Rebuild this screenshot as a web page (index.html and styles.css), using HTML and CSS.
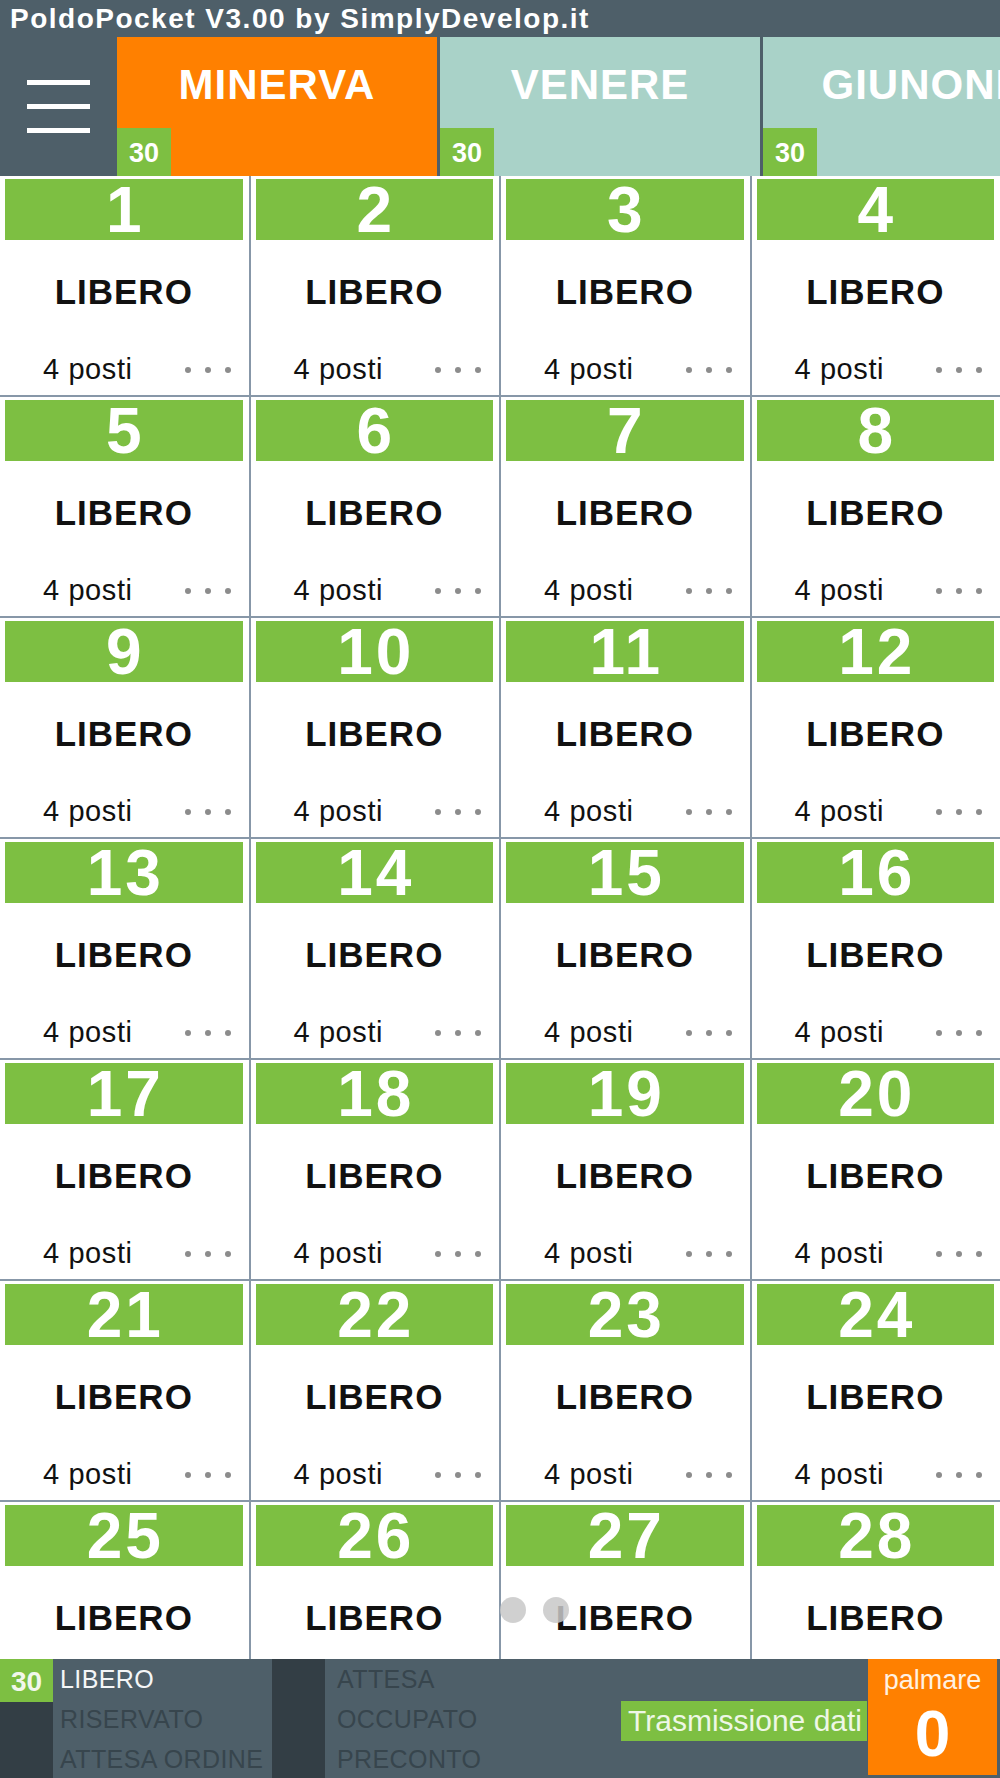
FILE: index.html
```html
<!DOCTYPE html>
<html lang="it">
<head>
  <meta charset="UTF-8" />
  <meta name="viewport" content="width=device-width, initial-scale=1.0" />
  <title>PoldoPocket</title>
  <link rel="stylesheet" href="styles.css">
</head>
<body>
  <div class="titlebar">PoldoPocket V3.00 by SimplyDevelop.it</div>

  <div class="tabbar">
    <div class="menu">
      <span></span><span></span><span></span>
    </div>
    <div class="tab active"><div class="tab-label">MINERVA</div><div class="badge">30</div></div>
    <div class="tab"><div class="tab-label">VENERE</div><div class="badge">30</div></div>
    <div class="tab"><div class="tab-label">GIUNONE</div><div class="badge">30</div></div>
  </div>

  <div class="grid">
    <div class="tile"><div class="tile-num">1</div><div class="tile-state">LIBERO</div><div class="tile-foot"><span>4 posti</span><span class="dots"><i></i><i></i><i></i></span></div></div>
    <div class="tile"><div class="tile-num">2</div><div class="tile-state">LIBERO</div><div class="tile-foot"><span>4 posti</span><span class="dots"><i></i><i></i><i></i></span></div></div>
    <div class="tile"><div class="tile-num">3</div><div class="tile-state">LIBERO</div><div class="tile-foot"><span>4 posti</span><span class="dots"><i></i><i></i><i></i></span></div></div>
    <div class="tile"><div class="tile-num">4</div><div class="tile-state">LIBERO</div><div class="tile-foot"><span>4 posti</span><span class="dots"><i></i><i></i><i></i></span></div></div>
    <div class="tile"><div class="tile-num">5</div><div class="tile-state">LIBERO</div><div class="tile-foot"><span>4 posti</span><span class="dots"><i></i><i></i><i></i></span></div></div>
    <div class="tile"><div class="tile-num">6</div><div class="tile-state">LIBERO</div><div class="tile-foot"><span>4 posti</span><span class="dots"><i></i><i></i><i></i></span></div></div>
    <div class="tile"><div class="tile-num">7</div><div class="tile-state">LIBERO</div><div class="tile-foot"><span>4 posti</span><span class="dots"><i></i><i></i><i></i></span></div></div>
    <div class="tile"><div class="tile-num">8</div><div class="tile-state">LIBERO</div><div class="tile-foot"><span>4 posti</span><span class="dots"><i></i><i></i><i></i></span></div></div>
    <div class="tile"><div class="tile-num">9</div><div class="tile-state">LIBERO</div><div class="tile-foot"><span>4 posti</span><span class="dots"><i></i><i></i><i></i></span></div></div>
    <div class="tile"><div class="tile-num">10</div><div class="tile-state">LIBERO</div><div class="tile-foot"><span>4 posti</span><span class="dots"><i></i><i></i><i></i></span></div></div>
    <div class="tile"><div class="tile-num">11</div><div class="tile-state">LIBERO</div><div class="tile-foot"><span>4 posti</span><span class="dots"><i></i><i></i><i></i></span></div></div>
    <div class="tile"><div class="tile-num">12</div><div class="tile-state">LIBERO</div><div class="tile-foot"><span>4 posti</span><span class="dots"><i></i><i></i><i></i></span></div></div>
    <div class="tile"><div class="tile-num">13</div><div class="tile-state">LIBERO</div><div class="tile-foot"><span>4 posti</span><span class="dots"><i></i><i></i><i></i></span></div></div>
    <div class="tile"><div class="tile-num">14</div><div class="tile-state">LIBERO</div><div class="tile-foot"><span>4 posti</span><span class="dots"><i></i><i></i><i></i></span></div></div>
    <div class="tile"><div class="tile-num">15</div><div class="tile-state">LIBERO</div><div class="tile-foot"><span>4 posti</span><span class="dots"><i></i><i></i><i></i></span></div></div>
    <div class="tile"><div class="tile-num">16</div><div class="tile-state">LIBERO</div><div class="tile-foot"><span>4 posti</span><span class="dots"><i></i><i></i><i></i></span></div></div>
    <div class="tile"><div class="tile-num">17</div><div class="tile-state">LIBERO</div><div class="tile-foot"><span>4 posti</span><span class="dots"><i></i><i></i><i></i></span></div></div>
    <div class="tile"><div class="tile-num">18</div><div class="tile-state">LIBERO</div><div class="tile-foot"><span>4 posti</span><span class="dots"><i></i><i></i><i></i></span></div></div>
    <div class="tile"><div class="tile-num">19</div><div class="tile-state">LIBERO</div><div class="tile-foot"><span>4 posti</span><span class="dots"><i></i><i></i><i></i></span></div></div>
    <div class="tile"><div class="tile-num">20</div><div class="tile-state">LIBERO</div><div class="tile-foot"><span>4 posti</span><span class="dots"><i></i><i></i><i></i></span></div></div>
    <div class="tile"><div class="tile-num">21</div><div class="tile-state">LIBERO</div><div class="tile-foot"><span>4 posti</span><span class="dots"><i></i><i></i><i></i></span></div></div>
    <div class="tile"><div class="tile-num">22</div><div class="tile-state">LIBERO</div><div class="tile-foot"><span>4 posti</span><span class="dots"><i></i><i></i><i></i></span></div></div>
    <div class="tile"><div class="tile-num">23</div><div class="tile-state">LIBERO</div><div class="tile-foot"><span>4 posti</span><span class="dots"><i></i><i></i><i></i></span></div></div>
    <div class="tile"><div class="tile-num">24</div><div class="tile-state">LIBERO</div><div class="tile-foot"><span>4 posti</span><span class="dots"><i></i><i></i><i></i></span></div></div>
    <div class="tile"><div class="tile-num">25</div><div class="tile-state">LIBERO</div><div class="tile-foot"><span>4 posti</span><span class="dots"><i></i><i></i><i></i></span></div></div>
    <div class="tile"><div class="tile-num">26</div><div class="tile-state">LIBERO</div><div class="tile-foot"><span>4 posti</span><span class="dots"><i></i><i></i><i></i></span></div></div>
    <div class="tile"><div class="tile-num">27</div><div class="tile-state">LIBERO</div><div class="tile-foot"><span>4 posti</span><span class="dots"><i></i><i></i><i></i></span></div></div>
    <div class="tile"><div class="tile-num">28</div><div class="tile-state">LIBERO</div><div class="tile-foot"><span>4 posti</span><span class="dots"><i></i><i></i><i></i></span></div></div>
  </div>

  <!-- indicatore di pagina -->
  <div class="pager"><span></span><span></span></div>

  <footer class="statusbar">
    <div class="count-col">
      <div class="count">30</div>
    </div>
    <div class="legend">
      <div class="on">LIBERO</div>
      <div>RISERVATO</div>
      <div>ATTESA ORDINE</div>
    </div>
    <div class="dark-col"></div>
    <div class="legend legend-2">
      <div>ATTESA</div>
      <div>OCCUPATO</div>
      <div>PRECONTO</div>
    </div>
    <div class="spacer"></div>
    <div class="trasm">Trasmissione dati</div>
    <div class="palmare">
      <div class="palmare-label">palmare</div>
      <div class="palmare-num">0</div>
    </div>
  </footer>
</body>
</html>
```

FILE: styles.css
```css
:root {
  --header: #4e5f69;
  --dark: #333e45;
  --orange: #ff8000;
  --teal: #a9d2c8;
  --green: #7dbf42;
  --line: #8797a8;
}

body {
  margin: 0;
  width: 1000px;
  height: 1778px;
  overflow: hidden;
  position: relative;
  font-family: 'Liberation Sans', Arial, sans-serif;
  background: var(--header);
}

.titlebar {
  height: 37px;
  line-height: 37px;
  padding-left: 10px;
  color: #fff;
  font-size: 28px;
  font-weight: 700;
  letter-spacing: 1.5px;
  white-space: nowrap;
}

.tabbar {
  display: flex;
  height: 139px;
  overflow: hidden;
}

.menu {
  width: 117px;
  flex-shrink: 0;
  display: flex;
  flex-direction: column;
  align-items: center;
  justify-content: center;
  gap: 19px;
}

.menu span {
  width: 63px;
  height: 5px;
  background: #fff;
}

.tab {
  position: relative;
  width: 320px;
  flex-shrink: 0;
  margin-right: 3px;
  background: var(--teal);
}

.tab.active {
  background: var(--orange);
}

.tab-label {
  padding-top: 24px;
  line-height: 48px;
  text-align: center;
  color: #fff;
  font-size: 42px;
  font-weight: 700;
  letter-spacing: 1px;
  white-space: nowrap;
}

.badge {
  position: absolute;
  left: 0;
  bottom: 0;
  width: 54px;
  height: 48px;
  line-height: 50px;
  text-align: center;
  background: var(--green);
  color: #fff;
  font-size: 27px;
  font-weight: 700;
}

.grid {
  display: grid;
  grid-template-columns: repeat(4, 1fr);
  grid-auto-rows: 219px;
  gap: 2px;
  align-content: start;
  height: 1483px;
  overflow: hidden;
  background: var(--line);
}

.tile {
  display: flex;
  flex-direction: column;
  padding: 3px 6px 0 5px;
  background: #fff;
}

.tile-num {
  height: 61px;
  line-height: 63px;
  text-align: center;
  background: var(--green);
  color: #fff;
  font-size: 64px;
  font-weight: 700;
  letter-spacing: 3px;
  padding-left: 3px;
}

.tile-state {
  height: 104px;
  display: flex;
  align-items: center;
  justify-content: center;
  color: #111;
  font-size: 35px;
  font-weight: 700;
  letter-spacing: 1px;
}

.tile-foot {
  height: 51px;
  display: flex;
  align-items: center;
  justify-content: space-between;
  padding: 0 12px 0 38px;
  color: #111;
  font-size: 29px;
  letter-spacing: 0.6px;
}

.dots {
  display: flex;
  gap: 14px;
}

.dots i {
  width: 6px;
  height: 6px;
  border-radius: 50%;
  background: #8c8c8c;
}

.pager {
  position: absolute;
  left: 500px;
  top: 1597px;
  display: flex;
  gap: 17px;
}

.pager span {
  width: 26px;
  height: 26px;
  border-radius: 50%;
  background: rgba(200, 200, 200, 0.85);
}

.statusbar {
  display: flex;
  height: 119px;
  background: var(--header);
}

.count-col {
  width: 53px;
  background: var(--dark);
}

.count {
  height: 43px;
  line-height: 45px;
  text-align: center;
  background: var(--green);
  color: #f2f7ec;
  font-size: 28px;
  font-weight: 700;
}

.legend {
  width: 212px;
  padding-left: 7px;
  color: #37454d;
  font-size: 25px;
  line-height: 40px;
  letter-spacing: 0.4px;
  white-space: nowrap;
}

.legend .on {
  color: #f4f6f7;
}

.legend-2 {
  width: auto;
  padding-left: 12px;
}

.dark-col {
  width: 53px;
  background: var(--dark);
}

.spacer {
  flex: 1;
}

.trasm {
  align-self: flex-start;
  margin-top: 42px;
  margin-right: 1px;
  height: 40px;
  line-height: 40px;
  padding: 0 5px 0 7px;
  background: var(--green);
  color: #eef7e6;
  font-size: 30px;
  white-space: nowrap;
}

.palmare {
  width: 129px;
  height: 116px;
  margin-right: 3px;
  display: flex;
  flex-direction: column;
  align-items: center;
  background: var(--orange);
  color: #fff;
}

.palmare-label {
  margin-top: 4px;
  line-height: 34px;
  font-size: 27px;
  color: #fff1e2;
}

.palmare-num {
  line-height: 74px;
  font-size: 64px;
  font-weight: 700;
}
```
